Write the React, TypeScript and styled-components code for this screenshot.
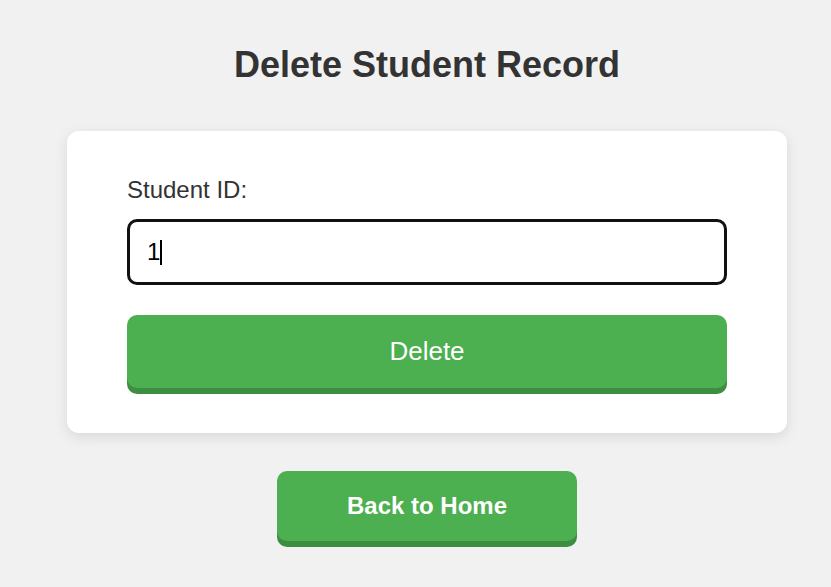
import React from "react";
import styled, { createGlobalStyle } from "styled-components";

const GlobalStyle = createGlobalStyle`
  html, body {
    margin: 0;
    padding: 0;
    background: #f1f1f1;
    font-family: "Liberation Sans", Arial, sans-serif;
  }
`;

const Page = styled.div`
  display: flex;
  flex-direction: column;
  align-items: center;
  padding: 45px 0 40px 23px;
`;

const Title = styled.h1`
  margin: 0;
  font-size: 36px;
  font-weight: bold;
  color: #333;
  line-height: 40px;
`;

const Card = styled.form`
  margin-top: 46px;
  width: 720px;
  box-sizing: border-box;
  padding: 45px 60px;
  background: #fff;
  border-radius: 12px;
  box-shadow: 0 4px 14px rgba(0, 0, 0, 0.1);
  display: flex;
  flex-direction: column;
`;

const Label = styled.label`
  font-size: 24px;
  line-height: 28px;
  color: #333;
`;

const InputWrap = styled.div`
  position: relative;
  margin-top: 15px;
  display: flex;
`;

const Input = styled.input`
  flex: 1;
  height: 66px;
  box-sizing: border-box;
  border: 3px solid #111;
  border-radius: 10px;
  padding: 0 17px;
  font-size: 24px;
  font-family: "Liberation Sans", Arial, sans-serif;
  color: #000;
  caret-color: transparent;
  outline: none;
`;

const Caret = styled.span`
  position: absolute;
  left: 33px;
  top: 21px;
  width: 2px;
  height: 25px;
  background: #000;
  pointer-events: none;
`;

const GreenButton = styled.button<{ $bold?: boolean; $width?: string; $height: number; $size: number }>`
  width: ${(p) => p.$width ?? "100%"};
  height: ${(p) => p.$height}px;
  border: none;
  border-radius: 10px;
  background: #4caf50;
  color: #fff;
  font-family: "Liberation Sans", Arial, sans-serif;
  font-size: ${(p) => p.$size}px;
  font-weight: ${(p) => (p.$bold ? "bold" : "normal")};
  box-shadow: 0 6px 0 #3e8e41;
  cursor: pointer;
  padding: 0;
`;

const DeleteButton = styled(GreenButton)`
  margin-top: 30px;
`;

const HomeWrap = styled.div`
  margin-top: 38px;
`;

export default function App() {
  return (
    <>
      <GlobalStyle />
      <Page>
        <Title>Delete Student Record</Title>
        <Card onSubmit={(e) => e.preventDefault()}>
          <Label htmlFor="sid">Student ID:</Label>
          <InputWrap>
            <Input id="sid" type="text" defaultValue="1" />
            <Caret />
          </InputWrap>
          <DeleteButton type="submit" $height={73} $size={26}>
            Delete
          </DeleteButton>
        </Card>
        <HomeWrap>
          <GreenButton type="button" $bold $width="300px" $height={70} $size={24}>
            Back to Home
          </GreenButton>
        </HomeWrap>
      </Page>
    </>
  );
}
